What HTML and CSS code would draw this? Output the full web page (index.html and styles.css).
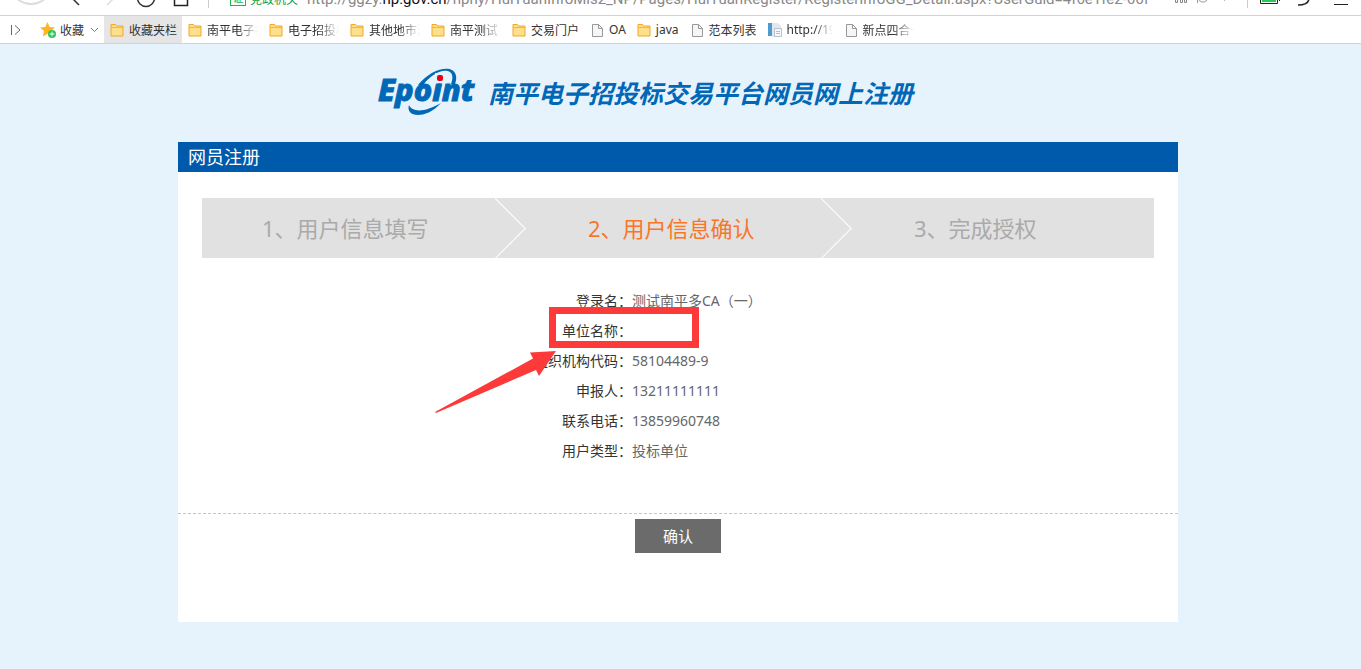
FILE: index.html
```html
<!DOCTYPE html>
<html lang="zh-CN">
<head>
    <meta charset="UTF-8">
    <meta name="viewport" content="width=device-width, initial-scale=1.0">
    <title>网员注册</title>
    <link rel="stylesheet" href="styles.css">
</head>
<body>
    <svg class="symbols" aria-hidden="true">
        <symbol id="folder" viewBox="0 0 16 16">
            <path d="M2 2.500h4.500l1 1.500h6.500v10h-12z" fill="#ffe08a" stroke="#f5a623"/>
            <path d="M2 5.500h12" stroke="#f5b63c"/>
        </symbol>
        <symbol id="page" viewBox="0 0 16 16">
            <path d="M3.500 2.500h6l4 4v8h-10z" fill="#f6f6f6" stroke="#999"/>
            <path d="M9.500 2.500v4h4" fill="none" stroke="#999"/>
        </symbol>
    </svg>

    <!-- 地址栏 -->
    <div class="address-bar">
        <svg class="nav-icons" width="224" height="15" viewBox="0 0 224 15" fill="none">
            <circle cx="31" cy="-17" r="21" fill="#fff" stroke="#ddd" stroke-width="2"/>
            <path d="M72-2l7 7" stroke="#333" stroke-width="1.500"/>
            <path d="M114-2l-7 7" stroke="#ddd" stroke-width="1.500"/>
            <circle cx="146" cy="-2" r="8.500" stroke="#333" stroke-width="1.500"/>
            <path d="M174.500-4v9.500h13V-4" stroke="#222" stroke-width="1.500"/>
            <path d="M208.500 0v8" stroke="#ccc"/>
        </svg>
        <div class="url">
            <span class="cert">证</span>
            <span class="org">党政机关</span>
            <span class="link">http://ggzy.<b>np.gov.cn</b>/nphy/HuiYuanInfoMis2_NP/Pages/HuiYuanRegister/RegisterInfoGG_Detail.aspx?UserGuid=4f6e1fe2-66f</span>
        </div>
        <svg class="tool-icons" width="190" height="15" viewBox="0 0 190 15" fill="none">
            <path d="M4.500-2v4.500h2v-4.500M9.500-2v4.500h2v-4.500M13.500-2v4.500h2v-4.500" stroke="#888"/>
            <path d="M27-2a5 5 0 0 0 9 2M26.500 3v-3" stroke="#999"/>
            <path d="M50-3l3.500 3.500l3.500-3.500" stroke="#999"/>
            <path d="M76.500 0v8" stroke="#ccc"/>
            <path d="M89.500-3v6.500h17v-6.500M108.500-2v3" stroke="#222"/>
            <path d="M91-2h14v4h-14z" fill="#22cc55"/>
            <path d="M127 5q11 0 11-7" stroke="#222" stroke-width="1.500"/>
            <path d="M163 4.500h14" stroke="#222"/>
        </svg>
    </div>

    <!-- 收藏栏 -->
    <nav class="bookmarks">
        <svg class="side" width="12" height="12" viewBox="0 0 12 12" fill="none" stroke="#666"><path d="M1.500 1v10M5 1.500L10 6l-5 4.500"/></svg>
        <a href="#" class="fav">
            <svg width="16" height="16" viewBox="0 0 16 16">
                <path d="M7.500 0l2.200 5 5.300.5-4 3.600 1.200 5.400-4.700-2.800-4.700 2.800L4 9.100 0 5.500 5.300 5z" fill="#ffb61e"/>
                <circle cx="12" cy="12" r="4" fill="#2bc15c"/>
                <path d="M12 9.500v5M9.500 12h5" stroke="#fff"/>
            </svg>
            <span>收藏</span>
            <svg width="9" height="6" viewBox="0 0 9 6" fill="none" stroke="#777"><path d="M1 1l3.500 3.500L8 1"/></svg>
        </a>
        <a href="#" class="item active"><svg><use href="#folder"/></svg><span>收藏夹栏</span></a>
        <a href="#" class="item"><svg><use href="#folder"/></svg><span class="fade">南平电子招</span></a>
        <a href="#" class="item"><svg><use href="#folder"/></svg><span class="fade">电子招投标</span></a>
        <a href="#" class="item"><svg><use href="#folder"/></svg><span class="fade">其他地市测</span></a>
        <a href="#" class="item"><svg><use href="#folder"/></svg><span class="fade">南平测试系</span></a>
        <a href="#" class="item"><svg><use href="#folder"/></svg><span>交易门户</span></a>
        <a href="#" class="item"><svg><use href="#page"/></svg><span>OA</span></a>
        <a href="#" class="item"><svg><use href="#folder"/></svg><span>java</span></a>
        <a href="#" class="item"><svg><use href="#page"/></svg><span>范本列表</span></a>
        <a href="#" class="item">
            <svg viewBox="0 0 16 16">
                <path d="M1 1h4v13h-4z" fill="#4f9bd0"/>
                <path d="M5 1h6l3 3v11h-9z" fill="#e3e8ee"/>
                <path d="M7.500 6.500h7v8h-7zM9 9.500h4M9 11.500h4" fill="#f5f7fa" stroke="#b5c2d0"/>
            </svg>
            <span class="fade short">http://19</span>
        </a>
        <a href="#" class="item"><svg><use href="#page"/></svg><span class="fade">新点四合一</span></a>
    </nav>

    <div class="wrap">
        <header class="header">
            <svg class="logo" width="100" height="50" viewBox="0 -1 100 50" role="img" aria-label="Epoint">
                <path d="M40 17C51 3 67-2 74 2c5 3 5 9 3 14h-4c2-5 2-10-1-12-6-4-18 1-27 13z" fill="#0068b7"/>
                <path d="M31 37c3 7 15 8 32-2-8 9-17 12-23 12-7 0-11-4-9-10z" fill="#0068b7"/>
                <text x="0" y="33" class="logo-text">Epoint</text>
                <rect x="57" y="5" width="10" height="10" fill="#e7f3fc"/>
                <rect x="59" y="7" width="6" height="6" rx="2" fill="#e60012"/>
            </svg>
            <h1>南平电子招投标交易平台网员网上注册</h1>
        </header>

        <main class="card">
            <h2>网员注册</h2>
            <ol class="steps">
                <li>1、用户信息填写</li>
                <li class="current">2、用户信息确认</li>
                <li>3、完成授权</li>
            </ol>

            <div class="info">
                <dl>
                    <dt>登录名：</dt><dd>测试南平多CA（一）</dd>
                    <dt>单位名称：</dt><dd></dd>
                    <dt>组织机构代码：</dt><dd>58104489-9</dd>
                    <dt>申报人：</dt><dd>13211111111</dd>
                    <dt>联系电话：</dt><dd>13859960748</dd>
                    <dt>用户类型：</dt><dd>投标单位</dd>
                </dl>
                <!-- 标注 -->
                <svg class="mark" width="270" height="110" viewBox="0 0 270 110" fill="#fc3a39">
                    <path d="M118.500 5.500h143v34h-143z" fill="none" stroke="#fc3a39" stroke-width="7"/>
                    <path d="M122 46l-26 1.500 3 6L1 107l1 1 100-43 3 6z"/>
                </svg>
            </div>

            <div class="actions">
                <button type="button">确认</button>
            </div>
        </main>
    </div>
</body>
</html>
```

FILE: styles.css
```css
* {
    box-sizing: border-box;
}

body {
    margin: 0;
    min-height: 100vh;
    background-color: #e7f3fc;
    font-family: "Noto Sans", "Noto Sans CJK SC", sans-serif;
    font-size: 14px;
    color: #333;
}

.symbols {
    display: none;
}

/* 地址栏 */
.address-bar {
    display: flex;
    align-items: flex-end;
    height: 15px;
    background-color: #fff;
    overflow: hidden;
}

.nav-icons, .tool-icons {
    flex: none;
}

.url {
    flex: 1;
    display: flex;
    align-items: center;
    min-width: 0;
    height: 33px;
    padding-left: 6px;
    white-space: nowrap;
    color: #888;
}

.cert {
    width: 16px;
    height: 15px;
    margin-right: 4px;
    border: 1px solid #14b84b;
    font-size: 11px;
    line-height: 12px;
    text-align: center;
    color: #14b84b;
}

.org {
    margin-right: 9px;
    font-size: 12px;
    color: #14a044;
}

.link {
    font-family: Roboto, sans-serif;
    font-size: 15px;
}

.link b {
    font-weight: normal;
    color: #111;
}

/* 收藏栏 */
.bookmarks {
    display: flex;
    align-items: center;
    height: 29px;
    padding-left: 10px;
    background-color: #fff;
    border-top: 1px solid #d0d4d4;
    border-bottom: 1px solid #d0d4d4;
    font-size: 12px;
    white-space: nowrap;
}

.bookmarks a {
    display: flex;
    align-items: center;
    height: 100%;
    color: #333;
    text-decoration: none;
}

.bookmarks .fav {
    gap: 4px;
    margin-left: 18px;
    padding-right: 5px;
}

.fav svg:last-child {
    margin-left: 2px;
}

.item {
    gap: 4px;
    padding: 0 5px;
}

.item.active {
    background-color: #e5e5e5;
}

.item svg {
    width: 16px;
    height: 16px;
}

.fade {
    width: 51px;
    overflow: hidden;
    -webkit-mask-image: linear-gradient(to right, #000 60%, transparent);
    mask-image: linear-gradient(to right, #000 60%, transparent);
}

.fade.short {
    width: 46px;
}

/* 页面主体 */
.wrap {
    max-width: 1005px;
    margin: 0 auto;
    padding-right: 5px;
}

.header {
    display: flex;
    align-items: center;
    gap: 10px;
    height: 98px;
    padding: 0 0 2px 200px;
}

.header h1 {
    margin: 0;
    font-size: 25px;
    font-style: italic;
    font-weight: bold;
    white-space: nowrap;
    color: #0068b7;
}

.logo {
    overflow: visible;
}

.logo-text {
    font-family: "Noto Sans", sans-serif;
    font-size: 31px;
    font-style: italic;
    font-weight: 800;
    fill: #0068b7;
    stroke: #0068b7;
    stroke-width: 1px;
}

.card {
    padding-bottom: 69px;
    background-color: #fff;
}

.card h2 {
    margin: 0;
    padding-left: 10px;
    background-color: #005aab;
    color: #fff;
    font-size: 18px;
    font-weight: normal;
    line-height: 30px;
}

.steps {
    display: flex;
    margin: 26px 24px 28px;
    padding: 0;
    list-style: none;
    background-color: #e1e1e1;
    color: #aaa;
    font-size: 22px;
    line-height: 60px;
    overflow: hidden;
}

.steps li {
    position: relative;
    flex: 0 0 326px;
    padding-left: 60px;
}

.steps li:last-child {
    flex: 1;
}

.steps .current {
    color: #f97628;
}

/* 步骤之间的箭头 */
.steps li:not(:last-child)::after {
    content: "";
    position: absolute;
    top: 9px;
    right: 11px;
    width: 42px;
    height: 42px;
    border-top: 1px solid #fff;
    border-right: 1px solid #fff;
    transform: rotate(45deg);
}

.info {
    position: relative;
}

.info dl {
    display: grid;
    grid-template-columns: 454px 1fr;
    margin: 0;
    line-height: 30px;
}

.info dt {
    text-align: right;
}

.info dd {
    margin: 0;
    color: #666;
}

.mark {
    position: absolute;
    top: 19px;
    left: 256px;
    overflow: visible;
}

.actions {
    margin-top: 47px;
    padding-top: 5px;
    border-top: 1px dashed #c4c4c4;
    text-align: center;
}

.actions button {
    display: block;
    width: 86px;
    height: 34px;
    margin: 0 auto;
    padding: 0 0 2px;
    border: none;
    background-color: #6b6b6b;
    color: #fff;
    font-family: inherit;
    font-size: 15px;
    cursor: pointer;
}
```
